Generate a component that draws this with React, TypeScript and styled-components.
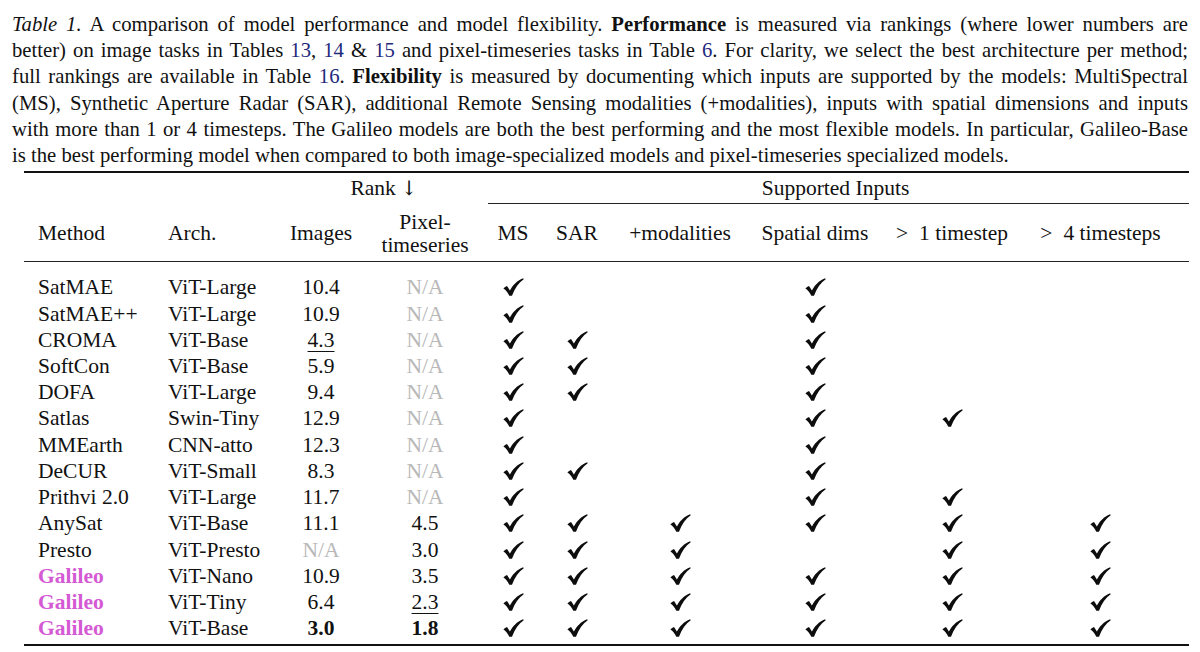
import React from "react";
import styled, { createGlobalStyle } from "styled-components";

const Global = createGlobalStyle`
  html, body { margin: 0; padding: 0; background: #ffffff; }
  body { font-family: "Liberation Serif", "Times New Roman", serif; color: #111; }
`;

const Page = styled.div`
  width: 1200px;
  height: 652px;
  box-sizing: border-box;
  padding: 11px 12px 0 12px;
  overflow: hidden;
`;

const Caption = styled.div`
  margin: 0;
  font-size: 20.7px;
  line-height: 26.2px;
  color: #111;
`;

const CaptionLine = styled.span<{ $last?: boolean }>`
  display: block;
  white-space: nowrap;
  text-align: justify;
  text-align-last: ${(p) => (p.$last ? "left" : "justify")};
`;

const Label = styled.i`
  font-style: italic;
`;

const Strong = styled.b`
  font-weight: 700;
`;

const Ref = styled.span`
  color: #1f2a7d;
`;

const TableGrid = styled.div`
  margin: 3px 0 0 12px;
  width: 1165px;
  display: grid;
  grid-template-columns: 134px 122px 82px 126px 50px 78px 128px 142px 132px 171px;
  grid-template-rows: 30px auto 57px auto 12px repeat(14, 26.23px) 3px;
  border-top: 2px solid #111;
  border-bottom: 2.5px solid #111;
  font-size: 21.5px;
`;

const GroupHead = styled.div<{ $from: number; $to: number }>`
  grid-column: ${(p) => p.$from} / ${(p) => p.$to};
  display: flex;
  align-items: center;
  justify-content: center;
  padding-right: ${(p) => (p.$to === 11 ? 6 : 0)}px;
`;

const Arrow = styled.span`
  font-family: "DejaVu Serif", serif;
  font-size: 20px;
  margin-left: 5px;
`;

const Rule = styled.div<{ $from: number; $to: number; $weight: number }>`
  grid-column: ${(p) => p.$from} / ${(p) => p.$to};
  height: 0;
  border-top: ${(p) => p.$weight}px solid #222;
`;

const Spacer = styled.div<{ $span?: number }>`
  grid-column: 1 / ${(p) => (p.$span ?? 10) + 1};
`;

const HeadCell = styled.div<{ $align?: "left" | "center"; $pad?: number; $padRight?: number }>`
  display: flex;
  align-items: center;
  justify-content: ${(p) => (p.$align === "left" ? "flex-start" : "center")};
  padding-left: ${(p) => p.$pad ?? 0}px;
  padding-right: ${(p) => p.$padRight ?? 0}px;
  padding-top: 2px;
  text-align: center;
  line-height: 23px;
  white-space: nowrap;
`;

const Rel = styled.span`
  margin-right: 11px;
`;

const Cell = styled.div<{ $align?: "left" | "center"; $pad?: number; $padRight?: number }>`
  display: flex;
  align-items: center;
  justify-content: ${(p) => (p.$align === "left" ? "flex-start" : "center")};
  padding-left: ${(p) => p.$pad ?? 0}px;
  padding-right: ${(p) => p.$padRight ?? 0}px;
  line-height: 26px;
  white-space: nowrap;
`;

const MethodName = styled.span<{ $ours?: boolean }>`
  color: ${(p) => (p.$ours ? "#d45ad4" : "#111")};
  font-weight: ${(p) => (p.$ours ? 700 : 400)};
`;

const Value = styled.span<{ $na?: boolean; $best?: boolean; $second?: boolean }>`
  color: ${(p) => (p.$na ? "#b8b8b8" : "#111")};
  font-weight: ${(p) => (p.$best ? 700 : 400)};
  text-decoration: ${(p) => (p.$second ? "underline" : "none")};
  text-decoration-thickness: 1px;
  text-underline-offset: 4px;
`;

const CheckBox = styled.span`
  display: inline-flex;
  width: 21px;
  height: 18px;
`;

const Check = () => (
  <CheckBox>
    <svg width="21" height="18" viewBox="0 0 21 18">
      <path
        d="M0.4 10.4 C1.4 9.2 2.6 8.4 4.0 8.0 C5.0 9.2 6.0 11.0 6.9 12.6 C9.6 7.4 13.8 2.8 20.2 0.3 L20.7 1.2 C15.6 4.8 11.8 10.2 9.0 17.7 L6.3 17.7 C4.8 14.6 2.8 11.8 0.4 10.4 Z"
        fill="#0d0d0d"
      />
    </svg>
  </CheckBox>
);

type Row = {
  method: string;
  arch: string;
  images: string;
  pixel: string;
  checks: string;
  ours?: boolean;
  imgFmt?: "best" | "second";
  pixFmt?: "best" | "second";
};

const rows: Row[] = [
  { method: "SatMAE", arch: "ViT-Large", images: "10.4", pixel: "N/A", checks: "100100" },
  { method: "SatMAE++", arch: "ViT-Large", images: "10.9", pixel: "N/A", checks: "100100" },
  { method: "CROMA", arch: "ViT-Base", images: "4.3", pixel: "N/A", checks: "110100", imgFmt: "second" },
  { method: "SoftCon", arch: "ViT-Base", images: "5.9", pixel: "N/A", checks: "110100" },
  { method: "DOFA", arch: "ViT-Large", images: "9.4", pixel: "N/A", checks: "110100" },
  { method: "Satlas", arch: "Swin-Tiny", images: "12.9", pixel: "N/A", checks: "100110" },
  { method: "MMEarth", arch: "CNN-atto", images: "12.3", pixel: "N/A", checks: "100100" },
  { method: "DeCUR", arch: "ViT-Small", images: "8.3", pixel: "N/A", checks: "110100" },
  { method: "Prithvi 2.0", arch: "ViT-Large", images: "11.7", pixel: "N/A", checks: "100110" },
  { method: "AnySat", arch: "ViT-Base", images: "11.1", pixel: "4.5", checks: "111111" },
  { method: "Presto", arch: "ViT-Presto", images: "N/A", pixel: "3.0", checks: "111011" },
  { method: "Galileo", arch: "ViT-Nano", images: "10.9", pixel: "3.5", checks: "111111", ours: true },
  { method: "Galileo", arch: "ViT-Tiny", images: "6.4", pixel: "2.3", checks: "111111", ours: true, pixFmt: "second" },
  { method: "Galileo", arch: "ViT-Base", images: "3.0", pixel: "1.8", checks: "111111", ours: true, imgFmt: "best", pixFmt: "best" },
];

export default function App() {
  return (
    <Page>
      <Global />
      <Caption>
        <CaptionLine>
          <Label>Table 1.</Label> A comparison of model performance and model flexibility.{" "}
          <Strong>Performance</Strong> is measured via rankings (where lower numbers are
        </CaptionLine>
        <CaptionLine>
          better) on image tasks in Tables <Ref>13</Ref>, <Ref>14</Ref> &amp; <Ref>15</Ref> and pixel-timeseries
          tasks in Table <Ref>6</Ref>. For clarity, we select the best architecture per method;
        </CaptionLine>
        <CaptionLine>
          full rankings are available in Table <Ref>16</Ref>. <Strong>Flexibility</Strong> is measured by
          documenting which inputs are supported by the models: MultiSpectral
        </CaptionLine>
        <CaptionLine>
          (MS), Synthetic Aperture Radar (SAR), additional Remote Sensing modalities (+modalities), inputs with
          spatial dimensions and inputs
        </CaptionLine>
        <CaptionLine>
          with more than 1 or 4 timesteps. The Galileo models are both the best performing and the most flexible
          models. In particular, Galileo-Base
        </CaptionLine>
        <CaptionLine $last>
          is the best performing model when compared to both image-specialized models and pixel-timeseries
          specialized models.
        </CaptionLine>
      </Caption>
      <TableGrid>
        <Spacer $span={2} />
        <GroupHead $from={3} $to={5}>
          Rank<Arrow>↓</Arrow>
        </GroupHead>
        <GroupHead $from={5} $to={11}>Supported Inputs</GroupHead>
        <Rule $from={5} $to={11} $weight={1} />

        <HeadCell $align="left" $pad={14}>Method</HeadCell>
        <HeadCell $align="left" $pad={10}>Arch.</HeadCell>
        <HeadCell>Images</HeadCell>
        <HeadCell>
          Pixel-
          <br />
          timeseries
        </HeadCell>
        <HeadCell>MS</HeadCell>
        <HeadCell>SAR</HeadCell>
        <HeadCell>+modalities</HeadCell>
        <HeadCell>Spatial dims</HeadCell>
        <HeadCell>
          <Rel>&gt;</Rel>1 timestep
        </HeadCell>
        <HeadCell $padRight={6}>
          <Rel>&gt;</Rel>4 timesteps
        </HeadCell>
        <Rule $from={1} $to={11} $weight={1.5} />
        <Spacer />

        {rows.map((r, idx) => (
          <React.Fragment key={idx}>
            <Cell $align="left" $pad={14}>
              <MethodName $ours={r.ours}>{r.method}</MethodName>
            </Cell>
            <Cell $align="left" $pad={10}>{r.arch}</Cell>
            <Cell>
              <Value $na={r.images === "N/A"} $best={r.imgFmt === "best"} $second={r.imgFmt === "second"}>
                {r.images}
              </Value>
            </Cell>
            <Cell>
              <Value $na={r.pixel === "N/A"} $best={r.pixFmt === "best"} $second={r.pixFmt === "second"}>
                {r.pixel}
              </Value>
            </Cell>
            {r.checks.split("").map((c, ci) => (
              <Cell key={ci} $padRight={ci === 5 ? 6 : 0}>
                {c === "1" ? <Check /> : null}
              </Cell>
            ))}
          </React.Fragment>
        ))}
        <Spacer />
      </TableGrid>
    </Page>
  );
}
